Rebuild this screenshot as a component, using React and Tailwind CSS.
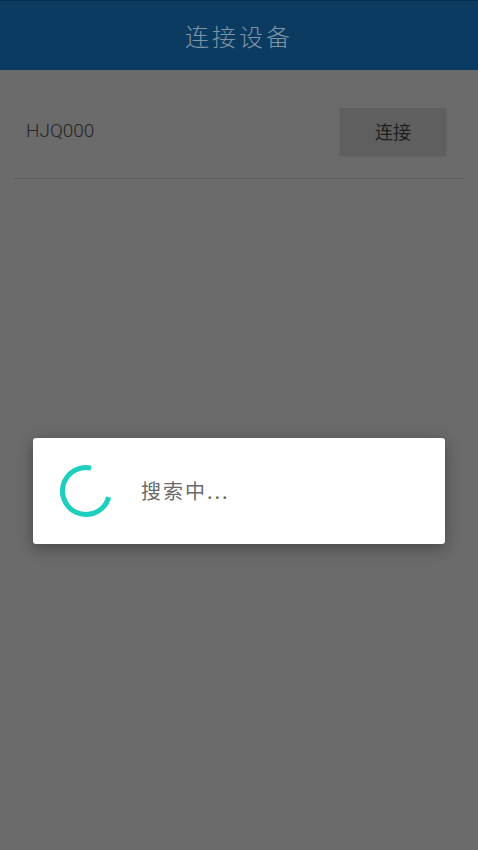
export default function App() {
  const cjk = { fontFamily: '"Noto Sans CJK SC", "Noto Sans", sans-serif' };
  return (
    <div className="w-[478px] h-[850px] bg-[#6b6b6b] flex flex-col overflow-hidden" style={cjk}>
      <div className="h-[70px] bg-[#0b3b61] border-t border-[#06304f] flex items-center justify-center shrink-0">
        <span className="text-[24px] text-[#7f95a6] tracking-[3px] font-light">连接设备</span>
      </div>
      <div className="px-[14px]">
        <div className="h-[109px] pt-[14px] flex items-center justify-between border-b border-[#5c5c5c]">
          <span className="pl-[12px] text-[19px] text-[#262626] font-['Roboto',sans-serif] font-light">HJQ000</span>
          <div className="mr-[18px] w-[106px] h-[47px] bg-[#5f5f5f] shadow-[0_1px_2px_rgba(0,0,0,0.15)] flex items-center justify-center">
            <span className="text-[18px] text-[#1e1e1e]">连接</span>
          </div>
        </div>
      </div>
      <div className="mt-[259px] mx-[33px] h-[106px] bg-white rounded-[3px] shadow-[0_4px_16px_rgba(0,0,0,0.35)] flex items-center pl-[26px]">
        <svg width="54" height="54" viewBox="0 0 54 54" className="shrink-0">
          <circle
            cx="27"
            cy="27"
            r="23.5"
            fill="none"
            stroke="#1ecfbd"
            strokeWidth="5"
            strokeDasharray="109 148"
            transform="rotate(15 27 27)"
          />
        </svg>
        <span className="ml-[28px] text-[20px] text-[#6a6a6a] tracking-[2px]">搜索中...</span>
      </div>
    </div>
  );
}
